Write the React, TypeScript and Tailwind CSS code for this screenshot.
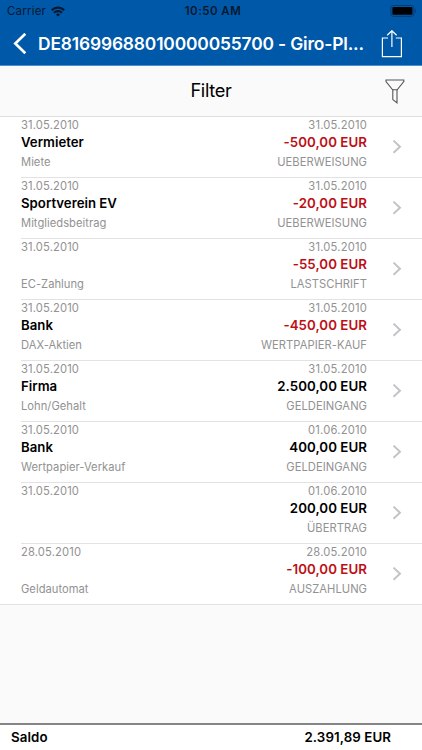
import React from "react";

interface Booking {
  date: string;
  name: string;
  purpose: string;
  valueDate: string;
  amount: string;
  type: string;
}

const bookings: Booking[] = [
  { date: "31.05.2010", name: "Vermieter", purpose: "Miete", valueDate: "31.05.2010", amount: "-500,00 EUR", type: "UEBERWEISUNG" },
  { date: "31.05.2010", name: "Sportverein EV", purpose: "Mitgliedsbeitrag", valueDate: "31.05.2010", amount: "-20,00 EUR", type: "UEBERWEISUNG" },
  { date: "31.05.2010", name: "", purpose: "EC-Zahlung", valueDate: "31.05.2010", amount: "-55,00 EUR", type: "LASTSCHRIFT" },
  { date: "31.05.2010", name: "Bank", purpose: "DAX-Aktien", valueDate: "31.05.2010", amount: "-450,00 EUR", type: "WERTPAPIER-KAUF" },
  { date: "31.05.2010", name: "Firma", purpose: "Lohn/Gehalt", valueDate: "31.05.2010", amount: "2.500,00 EUR", type: "GELDEINGANG" },
  { date: "31.05.2010", name: "Bank", purpose: "Wertpapier-Verkauf", valueDate: "01.06.2010", amount: "400,00 EUR", type: "GELDEINGANG" },
  { date: "31.05.2010", name: "", purpose: "", valueDate: "01.06.2010", amount: "200,00 EUR", type: "ÜBERTRAG" },
  { date: "28.05.2010", name: "", purpose: "Geldautomat", valueDate: "28.05.2010", amount: "-100,00 EUR", type: "AUSZAHLUNG" },
];

const StatusBar: React.FC = () => (
  <div className="grid h-[22px] grid-cols-3 items-center pl-[7px] pr-[5px] text-[#06182e]">
    <div className="flex items-center gap-[5px] pt-px">
      <span className="text-[11.5px] tracking-[0.2px]">Carrier</span>
      <svg width="14" height="11" viewBox="0 0 14 11" fill="none" stroke="currentColor" strokeWidth="2.1">
        <path d="M0.7 4.2C4.2 0.7 9.8 0.7 13.3 4.2" />
        <path d="M3 6.8C5.2 4.6 8.8 4.6 11 6.8" />
        <path d="M7 10.6L4.9 8.4C6 7.3 8 7.3 9.1 8.4Z" fill="currentColor" stroke="none" />
      </svg>
    </div>
    <span className="pl-0.5 pt-px text-center text-[11.5px] font-semibold tracking-[0.45px]">10:50 AM</span>
    <svg className="justify-self-end" width="27" height="12" viewBox="0 0 27 12">
      <rect x="0.9" y="0.5" width="23" height="10.8" rx="2.4" fill="none" stroke="#063a72" />
      <rect x="2.4" y="2" width="20" height="7.8" rx="1" fill="#000" />
      <path d="M25.2 4v4c1.2-.4 1.2-3.6 0-4z" fill="#063a72" />
    </svg>
  </div>
);

const Header: React.FC = () => (
  <header className="h-[66px] border-b border-[#4c8fcc] bg-[#0058a9]">
    <StatusBar />
    <div className="flex h-[43px] items-center text-white">
      <button className="ml-[13px]">
        <svg width="15" height="22" viewBox="0 0 15 22" fill="none" stroke="currentColor" strokeWidth="2.7">
          <path d="M12.3 0.8L2.3 10.5L12.3 20.2" />
        </svg>
      </button>
      <h1 className="ml-[10px] w-[330px] whitespace-nowrap text-[17.4px] font-semibold leading-[43px] tracking-[-0.15px]">
        DE81699688010000055700 - Giro-Pl...
      </h1>
      <button className="ml-[13px]">
        <svg width="22" height="28" viewBox="0 0 22 28" fill="none" stroke="currentColor" strokeWidth="1.2">
          <path d="M7 8H1.4V26.7H20.4V8H14.8" />
          <path d="M10.9 17V0.9M6.2 5.3L10.9 0.7L15.6 5.3" />
        </svg>
      </button>
    </div>
  </header>
);

const FilterBar: React.FC = () => (
  <div className="grid h-[51px] grid-cols-[1fr_auto_1fr] items-center border-b border-[#dedede] bg-[#fafafa]">
    <span className="col-start-2 text-[18.2px] tracking-[-0.3px] text-black">Filter</span>
    <button className="mr-[17px] justify-self-end">
      <svg width="20" height="25" viewBox="0 0 20 25" fill="none" stroke="#555" strokeWidth="1.1">
        <path d="M1 1H18.8V2.5L12.2 10.8H7.6L1 2.5Z" />
        <path d="M7.8 10.8V20.6L12 23.8V10.8" />
      </svg>
    </button>
  </div>
);

const BookingRow: React.FC<{ booking: Booking }> = ({ booking }) => {
  const negative = booking.amount.startsWith("-");

  return (
    <li className="pl-[21px] last:pl-0">
      <div className="flex h-[61px] border-b border-[#e2e2e4] in-[li:last-child]:pl-[21px]">
        <div className="flex-1 text-[11.2px] tracking-[0.02px] text-[#929292]">
          <div className="h-[17px] leading-[17px] tracking-[0.14px]">{booking.date}</div>
          <div className="h-4 text-[13.2px] font-semibold leading-4 text-black">{booking.name}</div>
          <div className="h-[23px] leading-[25px]">{booking.purpose}</div>
        </div>
        <div className="text-right text-[11.2px] tracking-[0.04px] text-[#929292]">
          <div className="h-[17px] leading-[17px] tracking-[0.2px]">{booking.valueDate}</div>
          <div
            className={`h-4 text-[13.3px] font-semibold leading-4 ${negative ? "text-[#bd0f14]" : "text-black"}`}
          >
            {booking.amount}
          </div>
          <div className="h-[23px] leading-[25px]">{booking.type}</div>
        </div>
        <div className="flex w-[55px] items-center pl-[25px]">
          <svg width="10" height="14" viewBox="0 0 10 14" fill="none" stroke="#c2c2c7" strokeWidth="1.9">
            <path d="M1.5 0.6L8 6.7L1.5 12.8" />
          </svg>
        </div>
      </div>
    </li>
  );
};

const App: React.FC = () => {
  return (
    <div className="flex h-[750px] w-[422px] flex-col overflow-hidden bg-[#fafafa] font-[Inter,sans-serif]">
      <Header />
      <FilterBar />

      {/* Bookings */}
      <ul className="bg-white">
        {bookings.map((booking, index) => (
          <BookingRow key={index} booking={booking} />
        ))}
      </ul>

      {/* Balance */}
      <footer className="mt-auto flex h-[27px] justify-between border-t-2 border-[#858585] bg-white pl-[11px] pr-[31px] text-[13.3px] font-semibold leading-[25px] tracking-[0.08px] text-black">
        <span>Saldo</span>
        <span>2.391,89 EUR</span>
      </footer>
    </div>
  );
};

export default App;
